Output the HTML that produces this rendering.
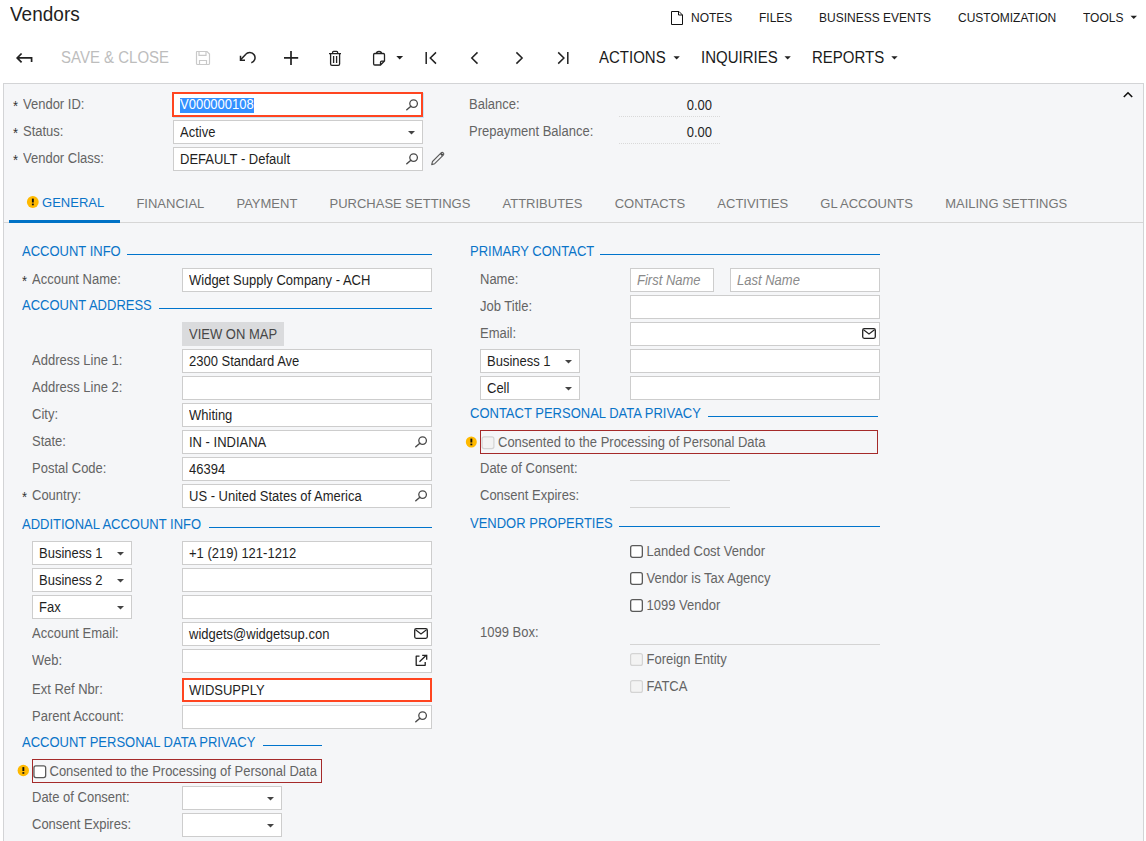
<!DOCTYPE html>
<html><head><meta charset="utf-8"><title>Vendors</title>
<style>
html,body{margin:0;padding:0;}
body{width:1146px;height:841px;overflow:hidden;position:relative;background:#fff;font-family:"Liberation Sans",sans-serif;}
.t{position:absolute;white-space:nowrap;transform:scaleY(1.07);}
.b{position:absolute;box-sizing:content-box;}
.tabs{position:absolute;left:9px;top:189px;height:34px;display:flex;font-size:13px;line-height:17px;color:#767676;}
.tab{padding:6px 16.08px 0 16.08px;height:28px;white-space:nowrap;box-sizing:content-box;}
.tab.act{color:#0a74c8;border-bottom:3px solid #0072c6;height:26px;padding-top:5px;}
.ti{display:inline-block;width:17px;height:10px;}
svg.ov{position:absolute;left:0;top:0;}
</style></head><body>
<div class="t" style="left:10px;top:2.92px;font-size:19px;line-height:23px;color:#1e1e1e;transform-origin:0 18.08px;">Vendors</div>
<div class="t" style="left:691px;top:9.84px;font-size:12px;line-height:16px;color:#1a1a1a;transform-origin:0 12.16px;">NOTES</div>
<div class="t" style="left:759px;top:9.84px;font-size:12px;line-height:16px;color:#1a1a1a;transform-origin:0 12.16px;">FILES</div>
<div class="t" style="left:819px;top:9.84px;font-size:12px;line-height:16px;color:#1a1a1a;transform-origin:0 12.16px;">BUSINESS EVENTS</div>
<div class="t" style="left:958px;top:9.84px;font-size:12px;line-height:16px;color:#1a1a1a;transform-origin:0 12.16px;">CUSTOMIZATION</div>
<div class="t" style="left:1083px;top:9.84px;font-size:12px;line-height:16px;color:#1a1a1a;transform-origin:0 12.16px;">TOOLS</div>
<div class="t" style="left:61px;top:48.30px;font-size:15px;line-height:19px;color:#bdbdbd;transform-origin:0 14.70px;">SAVE &amp; CLOSE</div>
<div class="t" style="left:599px;top:48.30px;font-size:15px;line-height:19px;color:#1a1a1a;transform-origin:0 14.70px;">ACTIONS</div>
<div class="t" style="left:701px;top:48.30px;font-size:15px;line-height:19px;color:#1a1a1a;transform-origin:0 14.70px;">INQUIRIES</div>
<div class="t" style="left:812px;top:48.30px;font-size:15px;line-height:19px;color:#1a1a1a;transform-origin:0 14.70px;">REPORTS</div>
<div class="b" style="left:3px;top:83px;width:1139px;height:780px;background:#f5f6f8;border:1px solid #d3d4d6;"></div>
<div class="t" style="left:13px;top:98.00px;font-size:13px;line-height:17px;color:#333;transform-origin:0 13.00px;">*</div>
<div class="t" style="left:23px;top:96.00px;font-size:13px;line-height:17px;color:#646464;transform-origin:0 13.00px;">Vendor ID:</div>
<div class="t" style="left:13px;top:125.00px;font-size:13px;line-height:17px;color:#333;transform-origin:0 13.00px;">*</div>
<div class="t" style="left:23px;top:123.00px;font-size:13px;line-height:17px;color:#646464;transform-origin:0 13.00px;">Status:</div>
<div class="t" style="left:13px;top:152.00px;font-size:13px;line-height:17px;color:#333;transform-origin:0 13.00px;">*</div>
<div class="t" style="left:23px;top:150.00px;font-size:13px;line-height:17px;color:#646464;transform-origin:0 13.00px;">Vendor Class:</div>
<div class="b" style="left:172px;top:92px;width:247px;height:21px;background:#fff;border:2px solid #ff4520;box-shadow:1px 1px 0 #c5e5f7;"></div>
<div class="b" style="left:180px;top:98px;width:74px;height:15px;background:#3390ff;"></div>
<div class="t" style="left:180px;top:96.00px;font-size:13px;line-height:17px;color:#fff;transform-origin:0 13.00px;">V000000108</div>
<div class="b" style="left:173px;top:120px;width:248px;height:22px;background:#fff;border:1px solid #cdcdcd;"></div>
<div class="t" style="left:180px;top:124.00px;font-size:13px;line-height:17px;color:#1f1f1f;transform-origin:0 13.00px;">Active</div>
<div class="b" style="left:173px;top:147px;width:248px;height:22px;background:#fff;border:1px solid #cdcdcd;"></div>
<div class="t" style="left:180px;top:151.00px;font-size:13px;line-height:17px;color:#1f1f1f;transform-origin:0 13.00px;">DEFAULT - Default</div>
<div class="t" style="left:469px;top:96.00px;font-size:13px;line-height:17px;color:#646464;transform-origin:0 13.00px;">Balance:</div>
<div class="t" style="left:469px;top:123.00px;font-size:13px;line-height:17px;color:#646464;transform-origin:0 13.00px;">Prepayment Balance:</div>
<div class="t" style="right:434px;top:97.00px;font-size:13px;line-height:17px;color:#1f1f1f;transform-origin:0 13.00px;">0.00</div>
<div class="t" style="right:434px;top:124.00px;font-size:13px;line-height:17px;color:#1f1f1f;transform-origin:0 13.00px;">0.00</div>
<div class="b" style="left:619px;top:116px;width:101px;height:1px;background:none;border-top:1px dotted #d9d9d9;height:0;"></div>
<div class="b" style="left:619px;top:143px;width:101px;height:1px;background:none;border-top:1px dotted #d9d9d9;height:0;"></div>
<div class="b" style="left:4px;top:222px;width:1139px;height:1px;background:#d6d6d6;"></div>
<div class="tabs"><div class="tab act"><span class="ti"></span>GENERAL</div><div class="tab">FINANCIAL</div><div class="tab">PAYMENT</div><div class="tab">PURCHASE SETTINGS</div><div class="tab">ATTRIBUTES</div><div class="tab">CONTACTS</div><div class="tab">ACTIVITIES</div><div class="tab">GL ACCOUNTS</div><div class="tab">MAILING SETTINGS</div></div>
<div class="t" style="left:22px;top:243.00px;font-size:13px;line-height:17px;color:#0a74c8;transform-origin:0 13.00px;">ACCOUNT INFO</div>
<div class="b" style="left:127px;top:254px;width:305px;height:1px;background:#0074cc;"></div>
<div class="t" style="left:22px;top:273.00px;font-size:13px;line-height:17px;color:#333;transform-origin:0 13.00px;">*</div>
<div class="t" style="left:32px;top:271.00px;font-size:13px;line-height:17px;color:#646464;transform-origin:0 13.00px;">Account Name:</div>
<div class="b" style="left:182px;top:268px;width:248px;height:22px;background:#fff;border:1px solid #cdcdcd;"></div>
<div class="t" style="left:189px;top:272.00px;font-size:13px;line-height:17px;color:#1f1f1f;transform-origin:0 13.00px;">Widget Supply Company - ACH</div>
<div class="t" style="left:22px;top:297.00px;font-size:13px;line-height:17px;color:#0a74c8;transform-origin:0 13.00px;">ACCOUNT ADDRESS</div>
<div class="b" style="left:159px;top:308px;width:273px;height:1px;background:#0074cc;"></div>
<div class="b" style="left:182px;top:322px;width:102px;height:24px;background:#dadbdd;"></div>
<div class="t" style="left:189px;top:326.00px;font-size:13px;line-height:17px;color:#474747;transform-origin:0 13.00px;">VIEW ON MAP</div>
<div class="t" style="left:32px;top:352.00px;font-size:13px;line-height:17px;color:#646464;transform-origin:0 13.00px;">Address Line 1:</div>
<div class="b" style="left:182px;top:349px;width:248px;height:22px;background:#fff;border:1px solid #cdcdcd;"></div>
<div class="t" style="left:189px;top:353.00px;font-size:13px;line-height:17px;color:#1f1f1f;transform-origin:0 13.00px;">2300 Standard Ave</div>
<div class="t" style="left:32px;top:379.00px;font-size:13px;line-height:17px;color:#646464;transform-origin:0 13.00px;">Address Line 2:</div>
<div class="b" style="left:182px;top:376px;width:248px;height:22px;background:#fff;border:1px solid #cdcdcd;"></div>
<div class="t" style="left:32px;top:406.00px;font-size:13px;line-height:17px;color:#646464;transform-origin:0 13.00px;">City:</div>
<div class="b" style="left:182px;top:403px;width:248px;height:22px;background:#fff;border:1px solid #cdcdcd;"></div>
<div class="t" style="left:189px;top:407.00px;font-size:13px;line-height:17px;color:#1f1f1f;transform-origin:0 13.00px;">Whiting</div>
<div class="t" style="left:32px;top:433.00px;font-size:13px;line-height:17px;color:#646464;transform-origin:0 13.00px;">State:</div>
<div class="b" style="left:182px;top:430px;width:248px;height:22px;background:#fff;border:1px solid #cdcdcd;"></div>
<div class="t" style="left:189px;top:434.00px;font-size:13px;line-height:17px;color:#1f1f1f;transform-origin:0 13.00px;">IN - INDIANA</div>
<div class="t" style="left:32px;top:460.00px;font-size:13px;line-height:17px;color:#646464;transform-origin:0 13.00px;">Postal Code:</div>
<div class="b" style="left:182px;top:457px;width:248px;height:22px;background:#fff;border:1px solid #cdcdcd;"></div>
<div class="t" style="left:189px;top:461.00px;font-size:13px;line-height:17px;color:#1f1f1f;transform-origin:0 13.00px;">46394</div>
<div class="t" style="left:22px;top:489.00px;font-size:13px;line-height:17px;color:#333;transform-origin:0 13.00px;">*</div>
<div class="t" style="left:32px;top:487.00px;font-size:13px;line-height:17px;color:#646464;transform-origin:0 13.00px;">Country:</div>
<div class="b" style="left:182px;top:484px;width:248px;height:22px;background:#fff;border:1px solid #cdcdcd;"></div>
<div class="t" style="left:189px;top:488.00px;font-size:13px;line-height:17px;color:#1f1f1f;transform-origin:0 13.00px;">US - United States of America</div>
<div class="t" style="left:22px;top:516.00px;font-size:13px;line-height:17px;color:#0a74c8;transform-origin:0 13.00px;">ADDITIONAL ACCOUNT INFO</div>
<div class="b" style="left:209px;top:527px;width:223px;height:1px;background:#0074cc;"></div>
<div class="b" style="left:32px;top:541px;width:98px;height:22px;background:#fff;border:1px solid #cdcdcd;"></div>
<div class="t" style="left:39px;top:545.00px;font-size:13px;line-height:17px;color:#1f1f1f;transform-origin:0 13.00px;">Business 1</div>
<div class="b" style="left:182px;top:541px;width:248px;height:22px;background:#fff;border:1px solid #cdcdcd;"></div>
<div class="t" style="left:189px;top:545.00px;font-size:13px;line-height:17px;color:#1f1f1f;transform-origin:0 13.00px;">+1 (219) 121-1212</div>
<div class="b" style="left:32px;top:568px;width:98px;height:22px;background:#fff;border:1px solid #cdcdcd;"></div>
<div class="t" style="left:39px;top:572.00px;font-size:13px;line-height:17px;color:#1f1f1f;transform-origin:0 13.00px;">Business 2</div>
<div class="b" style="left:182px;top:568px;width:248px;height:22px;background:#fff;border:1px solid #cdcdcd;"></div>
<div class="b" style="left:32px;top:595px;width:98px;height:22px;background:#fff;border:1px solid #cdcdcd;"></div>
<div class="t" style="left:39px;top:599.00px;font-size:13px;line-height:17px;color:#1f1f1f;transform-origin:0 13.00px;">Fax</div>
<div class="b" style="left:182px;top:595px;width:248px;height:22px;background:#fff;border:1px solid #cdcdcd;"></div>
<div class="t" style="left:32px;top:625.00px;font-size:13px;line-height:17px;color:#646464;transform-origin:0 13.00px;">Account Email:</div>
<div class="b" style="left:182px;top:622px;width:248px;height:22px;background:#fff;border:1px solid #cdcdcd;"></div>
<div class="t" style="left:189px;top:626.00px;font-size:13px;line-height:17px;color:#1f1f1f;transform-origin:0 13.00px;">widgets@widgetsup.con</div>
<div class="t" style="left:32px;top:652.00px;font-size:13px;line-height:17px;color:#646464;transform-origin:0 13.00px;">Web:</div>
<div class="b" style="left:182px;top:649px;width:248px;height:22px;background:#fff;border:1px solid #cdcdcd;"></div>
<div class="t" style="left:32px;top:681.00px;font-size:13px;line-height:17px;color:#646464;transform-origin:0 13.00px;">Ext Ref Nbr:</div>
<div class="b" style="left:182px;top:678px;width:246px;height:20px;background:#fff;border:2px solid #ff4520;"></div>
<div class="t" style="left:189px;top:682.00px;font-size:13px;line-height:17px;color:#1f1f1f;transform-origin:0 13.00px;">WIDSUPPLY</div>
<div class="t" style="left:32px;top:708.00px;font-size:13px;line-height:17px;color:#646464;transform-origin:0 13.00px;">Parent Account:</div>
<div class="b" style="left:182px;top:705px;width:248px;height:22px;background:#fff;border:1px solid #cdcdcd;"></div>
<div class="t" style="left:22px;top:734.00px;font-size:13px;line-height:17px;color:#0a74c8;transform-origin:0 13.00px;">ACCOUNT PERSONAL DATA PRIVACY</div>
<div class="b" style="left:263px;top:745px;width:59px;height:1px;background:#0074cc;"></div>
<div class="b" style="left:32px;top:759px;width:288px;height:22px;background:transparent;border:1px solid #a52a2a;"></div>
<div class="t" style="left:49.5px;top:763.00px;font-size:13px;line-height:17px;color:#646464;transform-origin:0 13.00px;">Consented to the Processing of Personal Data</div>
<div class="t" style="left:32px;top:789.00px;font-size:13px;line-height:17px;color:#646464;transform-origin:0 13.00px;">Date of Consent:</div>
<div class="b" style="left:182px;top:786px;width:98px;height:22px;background:#fff;border:1px solid #cdcdcd;"></div>
<div class="t" style="left:32px;top:816.00px;font-size:13px;line-height:17px;color:#646464;transform-origin:0 13.00px;">Consent Expires:</div>
<div class="b" style="left:182px;top:813px;width:98px;height:22px;background:#fff;border:1px solid #cdcdcd;"></div>
<div class="t" style="left:470px;top:243.00px;font-size:13px;line-height:17px;color:#0a74c8;transform-origin:0 13.00px;">PRIMARY CONTACT</div>
<div class="b" style="left:600px;top:254px;width:280px;height:1px;background:#0074cc;"></div>
<div class="t" style="left:480px;top:271.00px;font-size:13px;line-height:17px;color:#646464;transform-origin:0 13.00px;">Name:</div>
<div class="b" style="left:630px;top:268px;width:82px;height:22px;background:#fff;border:1px solid #cdcdcd;"></div>
<div class="t" style="left:637px;top:272.00px;font-size:13px;line-height:17px;color:#8a8a8a;transform-origin:0 13.00px;font-style:italic;">First Name</div>
<div class="b" style="left:730px;top:268px;width:148px;height:22px;background:#fff;border:1px solid #cdcdcd;"></div>
<div class="t" style="left:737px;top:272.00px;font-size:13px;line-height:17px;color:#8a8a8a;transform-origin:0 13.00px;font-style:italic;">Last Name</div>
<div class="t" style="left:480px;top:298.00px;font-size:13px;line-height:17px;color:#646464;transform-origin:0 13.00px;">Job Title:</div>
<div class="b" style="left:630px;top:295px;width:248px;height:22px;background:#fff;border:1px solid #cdcdcd;"></div>
<div class="t" style="left:480px;top:325.00px;font-size:13px;line-height:17px;color:#646464;transform-origin:0 13.00px;">Email:</div>
<div class="b" style="left:630px;top:322px;width:248px;height:22px;background:#fff;border:1px solid #cdcdcd;"></div>
<div class="b" style="left:480px;top:349px;width:98px;height:22px;background:#fff;border:1px solid #cdcdcd;"></div>
<div class="t" style="left:487px;top:353.00px;font-size:13px;line-height:17px;color:#1f1f1f;transform-origin:0 13.00px;">Business 1</div>
<div class="b" style="left:630px;top:349px;width:248px;height:22px;background:#fff;border:1px solid #cdcdcd;"></div>
<div class="b" style="left:480px;top:376px;width:98px;height:22px;background:#fff;border:1px solid #cdcdcd;"></div>
<div class="t" style="left:487px;top:380.00px;font-size:13px;line-height:17px;color:#1f1f1f;transform-origin:0 13.00px;">Cell</div>
<div class="b" style="left:630px;top:376px;width:248px;height:22px;background:#fff;border:1px solid #cdcdcd;"></div>
<div class="t" style="left:470px;top:405.00px;font-size:13px;line-height:17px;color:#0a74c8;transform-origin:0 13.00px;">CONTACT PERSONAL DATA PRIVACY</div>
<div class="b" style="left:708px;top:416px;width:170px;height:1px;background:#0074cc;"></div>
<div class="b" style="left:480px;top:430px;width:396px;height:22px;background:transparent;border:1px solid #a52a2a;"></div>
<div class="t" style="left:498px;top:434.00px;font-size:13px;line-height:17px;color:#646464;transform-origin:0 13.00px;">Consented to the Processing of Personal Data</div>
<div class="t" style="left:480px;top:460.00px;font-size:13px;line-height:17px;color:#646464;transform-origin:0 13.00px;">Date of Consent:</div>
<div class="b" style="left:630px;top:480px;width:100px;height:1px;background:#d4d4d4;"></div>
<div class="t" style="left:480px;top:487.00px;font-size:13px;line-height:17px;color:#646464;transform-origin:0 13.00px;">Consent Expires:</div>
<div class="b" style="left:630px;top:507px;width:100px;height:1px;background:#d4d4d4;"></div>
<div class="t" style="left:470px;top:515.00px;font-size:13px;line-height:17px;color:#0a74c8;transform-origin:0 13.00px;">VENDOR PROPERTIES</div>
<div class="b" style="left:619px;top:526px;width:261px;height:1px;background:#0074cc;"></div>
<div class="t" style="left:646.5px;top:542.50px;font-size:13px;line-height:17px;color:#646464;transform-origin:0 13.00px;">Landed Cost Vendor</div>
<div class="t" style="left:646.5px;top:569.50px;font-size:13px;line-height:17px;color:#646464;transform-origin:0 13.00px;">Vendor is Tax Agency</div>
<div class="t" style="left:646.5px;top:596.50px;font-size:13px;line-height:17px;color:#646464;transform-origin:0 13.00px;">1099 Vendor</div>
<div class="t" style="left:480px;top:624.00px;font-size:13px;line-height:17px;color:#646464;transform-origin:0 13.00px;">1099 Box:</div>
<div class="b" style="left:630px;top:644px;width:250px;height:1px;background:#d4d4d4;"></div>
<div class="t" style="left:646.5px;top:650.50px;font-size:13px;line-height:17px;color:#646464;transform-origin:0 13.00px;">Foreign Entity</div>
<div class="t" style="left:646.5px;top:677.50px;font-size:13px;line-height:17px;color:#646464;transform-origin:0 13.00px;">FATCA</div>
<svg class="ov" width="1146" height="841" viewBox="0 0 1146 841">
<path d="M671.5,11.5 H679 L682.5,15 V24.5 H671.5 Z M678.5,11.5 V15 H682.5" fill="none" stroke="#111" stroke-width="1"/>
<path d="M1130.5,15.8 h6.5 l-3.25,3.3 z" fill="#222"/>
<path d="M21.6,53.5 L17.2,57.9 L21.6,62.3 M17.2,57.9 H31.6 V62" fill="none" stroke="#222" stroke-width="1.7"/>
<path d="M197,51.5 H207 L209.5,54 V63.5 Q209.5,64.5 208.5,64.5 H197.5 Q196.5,64.5 196.5,63.5 V52 Q196.5,51.5 197,51.5 Z" fill="none" stroke="#c9c9c9" stroke-width="1.2"/>
<path d="M199,51.5 V55.3 H206 V51.5 M199.5,64.5 V60.5 H206.5 V64.5" fill="none" stroke="#c9c9c9" stroke-width="1.2"/>
<path d="M240.6,59.8 L245.6,54.4 A5.3,5.3 0 1 1 251.3,62.8" fill="none" stroke="#222" stroke-width="1.5"/>
<path d="M240.5,55.8 V60.3 H245" fill="none" stroke="#222" stroke-width="1.5"/>
<path d="M284,57.9 H298.2 M291,51 V65" fill="none" stroke="#222" stroke-width="1.7"/>
<path d="M329,53.6 H341 M332.6,53.6 V52.3 Q332.6,51.3 333.6,51.3 H336.6 Q337.6,51.3 337.6,52.3 V53.6 M330.6,53.6 V64 Q330.6,65.3 331.9,65.3 H338.3 Q339.6,65.3 339.6,64 V53.6 M333.6,56 V63 M336.6,56 V63" fill="none" stroke="#222" stroke-width="1.3"/>
<path d="M374.8,53.5 H383.3 Q384.5,53.5 384.5,54.7 V61 L380.5,65 H374.8 Q373.6,65 373.6,63.8 V54.7 Q373.6,53.5 374.8,53.5 Z M380.5,65 V62.3 Q380.5,61.2 381.6,61.2 H384.5 M376.5,53.5 Q376.5,51.3 379,51.3 Q381.5,51.3 381.5,53.5" fill="none" stroke="#222" stroke-width="1.3"/>
<path d="M396.3,56.1 h6.8 l-3.4,3.3 z" fill="#222"/>
<path d="M426.2,52 V64 M436,52.4 L430.3,58 L436,63.6" fill="none" stroke="#222" stroke-width="1.5"/>
<path d="M477.5,52.4 L471.8,58 L477.5,63.6" fill="none" stroke="#222" stroke-width="1.5"/>
<path d="M516.4,52.4 L522.1,58 L516.4,63.6" fill="none" stroke="#222" stroke-width="1.5"/>
<path d="M558.2,52.4 L563.9,58 L558.2,63.6 M567.8,52 V64" fill="none" stroke="#222" stroke-width="1.5"/>
<path d="M673.5,56.2 h6.3 l-3.15,3.2 z" fill="#222"/>
<path d="M784.5,56.2 h6.3 l-3.15,3.2 z" fill="#222"/>
<path d="M891.3,56.2 h6.3 l-3.15,3.2 z" fill="#222"/>
<path d="M1123.8,97 L1128,92.8 L1132.2,97" fill="none" stroke="#111" stroke-width="1.6"/>
<circle cx="413.6" cy="103.6" r="3.8" fill="none" stroke="#4a4a4a" stroke-width="1.3"/>
<path d="M410.90000000000003,106.3 L406.8,109.8" stroke="#4a4a4a" stroke-width="1.5" stroke-linecap="round"/>
<path d="M408,131 h7 l-3.5,3.5 z" fill="#444"/>
<circle cx="413.6" cy="157.6" r="3.8" fill="none" stroke="#4a4a4a" stroke-width="1.3"/>
<path d="M410.90000000000003,160.29999999999998 L406.8,163.8" stroke="#4a4a4a" stroke-width="1.5" stroke-linecap="round"/>
<path d="M431.7,164.6 L432.5,161.5 L441.1,152.9 A1.55,1.55 0 0 1 443.3,155.1 L434.7,163.7 Z" fill="none" stroke="#5a5a5a" stroke-width="1.1" stroke-linejoin="round"/>
<path d="M440.9,153.6 L442.6,155.3" stroke="#444" stroke-width="2"/>
<circle cx="32.8" cy="202" r="5.9" fill="#ffb900"/>
<rect x="31.9" y="198.6" width="1.9" height="3.9" fill="#111"/>
<rect x="31.9" y="203.6" width="1.9" height="1.7" fill="#111"/>
<circle cx="422.6" cy="440.6" r="3.8" fill="none" stroke="#4a4a4a" stroke-width="1.3"/>
<path d="M419.90000000000003,443.3 L415.8,446.8" stroke="#4a4a4a" stroke-width="1.5" stroke-linecap="round"/>
<circle cx="422.6" cy="494.6" r="3.8" fill="none" stroke="#4a4a4a" stroke-width="1.3"/>
<path d="M419.90000000000003,497.3 L415.8,500.8" stroke="#4a4a4a" stroke-width="1.5" stroke-linecap="round"/>
<path d="M117,552 h7 l-3.5,3.5 z" fill="#444"/>
<path d="M117,579 h7 l-3.5,3.5 z" fill="#444"/>
<path d="M117,606 h7 l-3.5,3.5 z" fill="#444"/>
<rect x="414.7" y="628.7" width="12.6" height="9.6" rx="1.5" fill="none" stroke="#222" stroke-width="1.3"/>
<path d="M415.5,629.8 L421,634 L426.5,629.8" fill="none" stroke="#222" stroke-width="1.1"/>
<path d="M419.5,656.2 H416.2 V665.3 H425.2 V662" fill="none" stroke="#222" stroke-width="1.3" stroke-linejoin="round"/>
<path d="M419.5,661.8 L426.5,655  M422.2,655.3 H426.7 V659.8" fill="none" stroke="#222" stroke-width="1.3"/>
<circle cx="422.6" cy="715.6" r="3.8" fill="none" stroke="#4a4a4a" stroke-width="1.3"/>
<path d="M419.90000000000003,718.3000000000001 L415.8,721.8" stroke="#4a4a4a" stroke-width="1.5" stroke-linecap="round"/>
<circle cx="23.3" cy="770.5" r="5.7" fill="#ffb900"/>
<rect x="22.400000000000002" y="767.1" width="1.9" height="3.9" fill="#111"/>
<rect x="22.400000000000002" y="772.1" width="1.9" height="1.7" fill="#111"/>
<rect x="33.949999999999996" y="765.85" width="11.7" height="11.7" rx="2" fill="#fff" stroke="#5a5a5a" stroke-width="1.3"/>
<path d="M267,797 h7 l-3.5,3.5 z" fill="#444"/>
<path d="M267,824 h7 l-3.5,3.5 z" fill="#444"/>
<rect x="862.7" y="328.7" width="12.6" height="9.6" rx="1.5" fill="none" stroke="#222" stroke-width="1.3"/>
<path d="M863.5,329.8 L869,334 L874.5,329.8" fill="none" stroke="#222" stroke-width="1.1"/>
<path d="M565,360 h7 l-3.5,3.5 z" fill="#444"/>
<path d="M565,387 h7 l-3.5,3.5 z" fill="#444"/>
<circle cx="471.3" cy="442" r="5.5" fill="#ffb900"/>
<rect x="470.40000000000003" y="438.6" width="1.9" height="3.9" fill="#111"/>
<rect x="470.40000000000003" y="443.6" width="1.9" height="1.7" fill="#111"/>
<rect x="482.1" y="436.8" width="11.8" height="11.8" rx="2" fill="#f3f3f3" stroke="#d4d4d4" stroke-width="1.2"/>
<rect x="630.65" y="545.65" width="11.7" height="11.7" rx="2" fill="#fff" stroke="#5a5a5a" stroke-width="1.3"/>
<rect x="630.65" y="572.65" width="11.7" height="11.7" rx="2" fill="#fff" stroke="#5a5a5a" stroke-width="1.3"/>
<rect x="630.65" y="599.65" width="11.7" height="11.7" rx="2" fill="#fff" stroke="#5a5a5a" stroke-width="1.3"/>
<rect x="630.6" y="653.6" width="11.8" height="11.8" rx="2" fill="#f3f3f3" stroke="#d4d4d4" stroke-width="1.2"/>
<rect x="630.6" y="680.6" width="11.8" height="11.8" rx="2" fill="#f3f3f3" stroke="#d4d4d4" stroke-width="1.2"/>
</svg>
</body></html>
